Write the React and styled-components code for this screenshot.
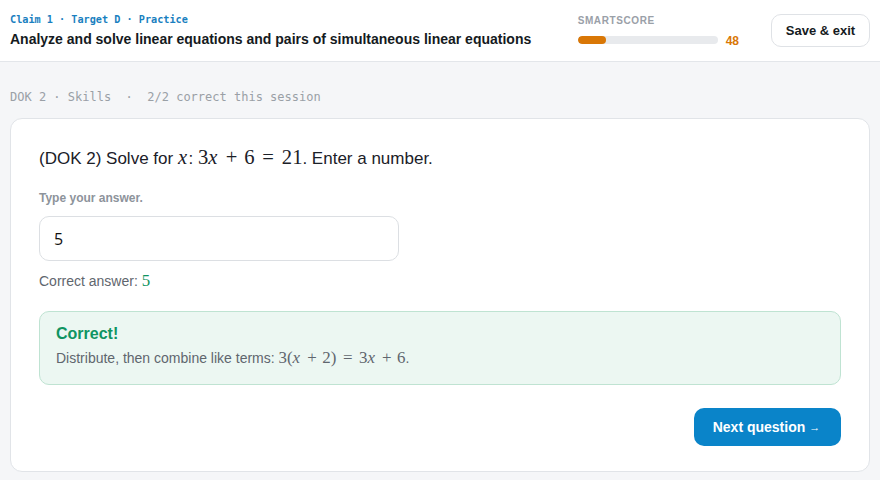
import React from "react";
import styled, { createGlobalStyle } from "styled-components";

const Global = createGlobalStyle`
  html, body { margin: 0; padding: 0; background: #f5f6f8; }
  body { font-family: "Liberation Sans", Arial, sans-serif; color: #1d232b; }
  * { box-sizing: border-box; }
`;

const Page = styled.div`
  width: 880px;
  min-height: 480px;
  background: #f5f6f8;
`;

const Header = styled.header`
  height: 62px;
  background: #fff;
  border-bottom: 1px solid #e3e6ea;
  display: flex;
  align-items: center;
  padding: 0 10px;
`;

const TitleBlock = styled.div`
  flex: 1;
  display: flex;
  flex-direction: column;
  gap: 3px;
  margin-top: -1px;
`;

const Crumb = styled.div`
  font-family: "DejaVu Sans Mono", "Liberation Mono", monospace;
  font-weight: bold;
  font-size: 10.2px;
  color: #1a7fc0;
  line-height: 14px;
`;

const Title = styled.h1`
  margin: 0;
  font-size: 14px;
  line-height: 18px;
  font-weight: bold;
  color: #151a21;
`;

const Score = styled.div`
  display: flex;
  flex-direction: column;
  gap: 5px;
  margin-right: 32px;
  margin-top: 2px;
`;

const ScoreLabel = styled.div`
  font-size: 10px;
  font-weight: bold;
  letter-spacing: 0.6px;
  color: #9aa0a8;
  line-height: 12px;
`;

const ScoreRow = styled.div`
  display: flex;
  align-items: center;
  gap: 8px;
`;

const Track = styled.div`
  width: 140px;
  height: 8px;
  border-radius: 4px;
  background: #e8eaed;
  overflow: hidden;
`;

const Fill = styled.div`
  height: 100%;
  border-radius: 4px;
  background: #d97706;
`;

const ScoreValue = styled.span`
  font-size: 12px;
  font-weight: bold;
  color: #d97706;
  line-height: 14px;
  margin-top: 2px;
`;

const SaveButton = styled.button`
  height: 33px;
  width: 99px;
  border: 1px solid #dfe2e6;
  border-radius: 10px;
  background: #fff;
  font-family: "Liberation Sans", Arial, sans-serif;
  font-size: 13px;
  font-weight: bold;
  color: #151a21;
  padding: 0;
`;

const Main = styled.main`
  padding: 27px 10px 8px;
`;

const Meta = styled.div`
  font-family: "DejaVu Sans Mono", "Liberation Mono", monospace;
  font-size: 12px;
  color: #9aa0a6;
  line-height: 16px;
  margin-bottom: 13px;
  white-space: pre;
`;

const Card = styled.section`
  background: #fff;
  border: 1px solid #e1e4e8;
  border-radius: 12px;
  padding: 26px 28px 24px;
  height: 354px;
  display: flex;
  flex-direction: column;
`;

const Question = styled.p`
  margin: 0;
  font-size: 17px;
  line-height: 24px;
  color: #1b2028;
`;

const M = styled.span`
  font-family: "Liberation Serif", "Times New Roman", serif;
  font-size: ${(p) => p.size || 20.6}px;
  font-style: ${(p) => (p.italic ? "italic" : "normal")};
  color: ${(p) => p.color || "inherit"};
  padding: 0 ${(p) => p.pad || 0}px;
  padding-right: ${(p) => (p.italic ? 1.5 : p.pad || 0)}px;
`;

const FieldLabel = styled.div`
  margin-top: 19px;
  font-size: 12px;
  font-weight: bold;
  color: #8d939b;
  line-height: 16px;
`;

const Input = styled.div`
  margin-top: 10px;
  width: 360px;
  height: 45px;
  border: 1px solid #dcdfe3;
  border-radius: 10px;
  display: flex;
  align-items: center;
  padding: 0 14px;
  font-family: "Open Sans", "Noto Sans", sans-serif;
  font-size: 16px;
  color: #111;
`;

const Answer = styled.div`
  margin-top: 10px;
  font-size: 14px;
  line-height: 20px;
  color: #5f666e;
`;

const Feedback = styled.div`
  margin-top: 20px;
  background: #ecf7f2;
  border: 1px solid #bfe3d2;
  border-radius: 10px;
  padding: 12px 16px 16px;
`;

const FeedbackTitle = styled.div`
  font-size: 16px;
  font-weight: bold;
  color: #0f9461;
  line-height: 20px;
`;

const FeedbackText = styled.div`
  margin-top: 4px;
  font-size: 14px;
  line-height: 20px;
  color: #5f666e;
`;

const Actions = styled.div`
  margin-top: 23px;
  display: flex;
  justify-content: flex-end;
`;

const NextButton = styled.button`
  height: 38px;
  width: 147px;
  border: none;
  border-radius: 10px;
  background: #0a84c9;
  color: #fff;
  font-family: "Liberation Sans", Arial, sans-serif;
  font-size: 14px;
  font-weight: bold;
  padding: 0 2px 0 0;
`;

const Arrow = styled.span`
  font-size: 11px;
  margin-left: 4px;
  vertical-align: 1px;
`;

export default function App() {
  const score = 48;
  const fs = 16.9;
  return (
    <Page>
      <Global />
      <Header>
        <TitleBlock>
          <Crumb>Claim 1 · Target D · Practice</Crumb>
          <Title>Analyze and solve linear equations and pairs of simultaneous linear equations</Title>
        </TitleBlock>
        <Score>
          <ScoreLabel>SMARTSCORE</ScoreLabel>
          <ScoreRow>
            <Track>
              <Fill style={{ width: `${score * 0.42}%` }} />
            </Track>
            <ScoreValue>{score}</ScoreValue>
          </ScoreRow>
        </Score>
        <SaveButton>Save &amp; exit</SaveButton>
      </Header>
      <Main>
        <Meta>DOK 2 · Skills  ·  2/2 correct this session</Meta>
        <Card>
          <Question>
            (DOK 2) Solve for <M italic>x</M>: <M>3</M><M italic>x</M>
            <M pad={6.8}>+</M><M>6</M><M pad={7.9}>=</M><M>21</M>. Enter a number.
          </Question>
          <FieldLabel>Type your answer.</FieldLabel>
          <Input>5</Input>
          <Answer>
            Correct answer: <M size={fs} color="#0f9461">5</M>
          </Answer>
          <Feedback>
            <FeedbackTitle>Correct!</FeedbackTitle>
            <FeedbackText>
              Distribute, then combine like terms: <M size={fs}>3(</M>
              <M size={fs} italic>x</M><M size={fs} pad={5.6}>+</M><M size={fs}>2)</M>
              <M size={fs} pad={6.5}>=</M><M size={fs}>3</M><M size={fs} italic>x</M>
              <M size={fs} pad={5.6}>+</M><M size={fs}>6</M>.
            </FeedbackText>
          </Feedback>
          <Actions>
            <NextButton>
              Next question<Arrow>→</Arrow>
            </NextButton>
          </Actions>
        </Card>
      </Main>
    </Page>
  );
}
